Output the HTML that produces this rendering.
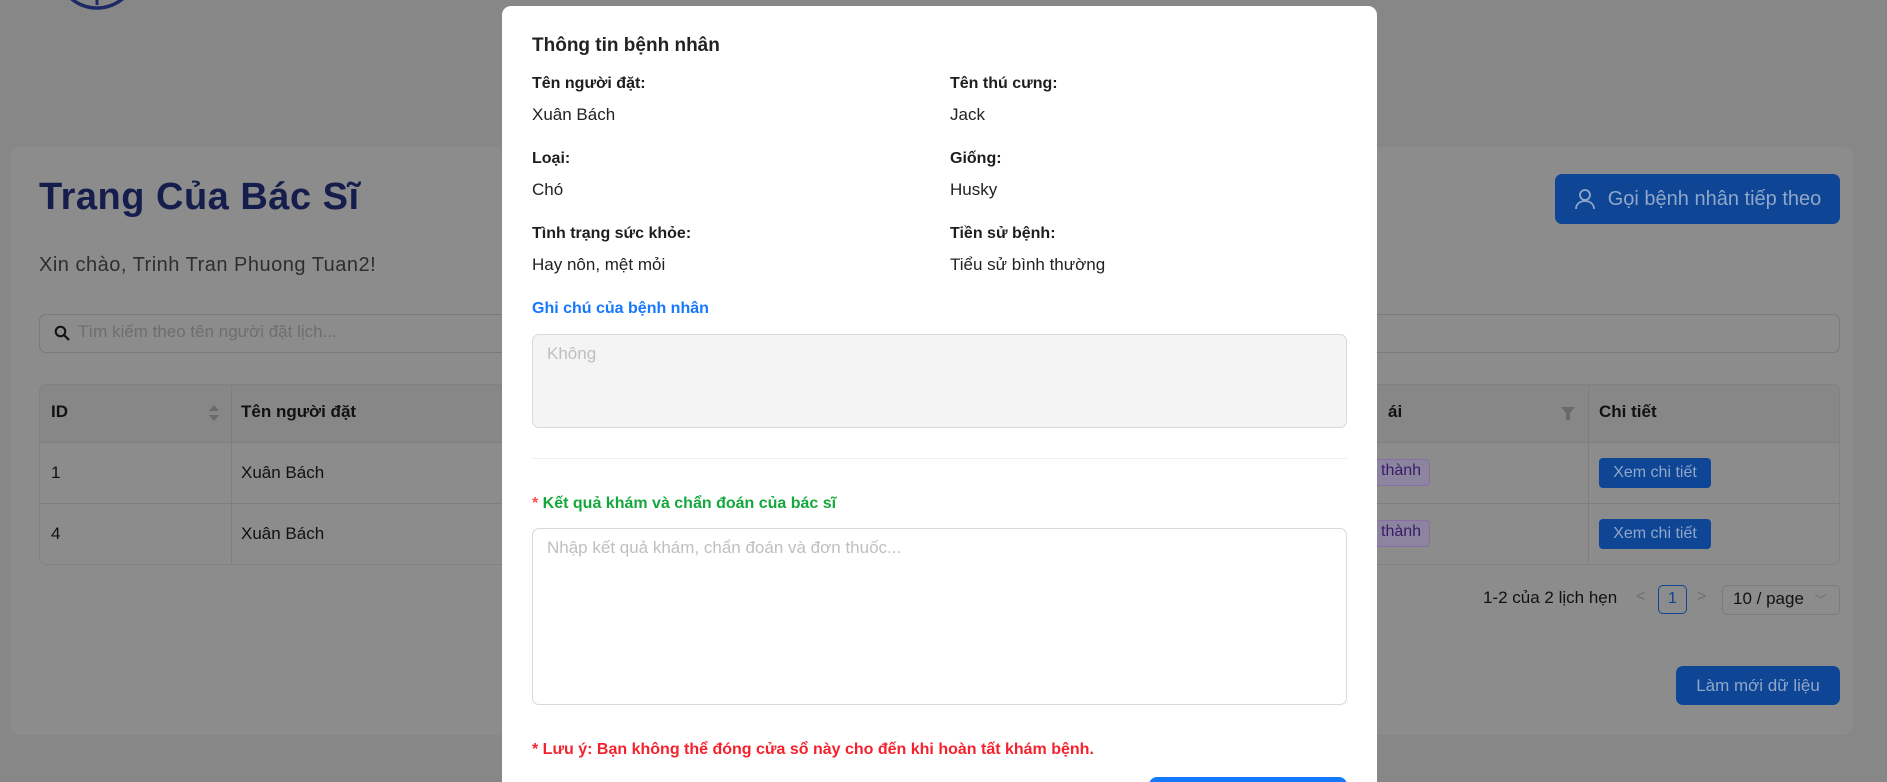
<!DOCTYPE html>
<html style="width:1887px;height:782px;overflow:hidden"><head><meta charset="utf-8"><style>
*{box-sizing:border-box;margin:0;padding:0}
body{width:1887px;height:782px;overflow:hidden;background:#878787;font-family:"Segoe UI","Liberation Sans",sans-serif;position:relative}
.a{position:absolute}
.card{left:10px;top:147px;width:1843px;height:588px;background:#8c8c8c;border-radius:10px}
.title{left:39px;top:176px;font:bold 38px "Liberation Sans",sans-serif;color:#151d4c;letter-spacing:0.5px}
.greet{left:39px;top:254px;font-size:20px;color:#2e2e2e;letter-spacing:0.5px}
.btn{background:#0e4595;color:#8fa7c9;border-radius:7px;display:flex;align-items:center;justify-content:center}
.search{left:39px;top:314px;width:1801px;height:39px;border:1px solid #7a7a7a;border-radius:7px;color:#6e6e6e;font-size:17px;padding:7px 0 0 38px}
.table{left:39px;top:384px;width:1801px;height:181px;border:1px solid #828282;border-radius:7px;overflow:hidden}
.row{position:absolute;left:0;width:100%;border-bottom:1px solid #7e7e7e}
.cell{position:absolute;font-size:17px;color:#111}
.vl{position:absolute;top:0;bottom:0;width:1px;background:#7e7e7e}
.modal{left:502px;top:6px;width:875px;height:776px;background:#fff;border-radius:9px 9px 0 0;overflow:hidden}
.m{position:absolute;font-size:17px;color:#222}
.lb{font-weight:bold;color:#1e1e1e;font-size:16px}
.ta{position:absolute;border:1px solid #d9d9d9;border-radius:7px;font-size:17px;color:#bfbfbf;padding:9px 14px}
</style></head><body>
<svg class="a" style="left:50px;top:0" width="100" height="14"><circle cx="47" cy="-32" r="40" fill="none" stroke="#1e2a66" stroke-width="3.5"/><line x1="47" y1="0" x2="47" y2="5" stroke="#1e2a66" stroke-width="3"/></svg>
<div class="a card"></div>
<div class="a title">Trang Của Bác Sĩ</div>
<div class="a greet">Xin chào, Trinh Tran Phuong Tuan2!</div>
<div class="a btn" style="left:1555px;top:174px;width:285px;height:50px;font-size:20px">
<svg width="22" height="22" viewBox="0 0 22 22" style="margin-right:12px"><circle cx="11" cy="7" r="5" fill="none" stroke="#8fa7c9" stroke-width="1.8"/><path d="M2 21c0-5 4-8 9-8s9 3 9 8" fill="none" stroke="#8fa7c9" stroke-width="1.8"/></svg>Gọi bệnh nhân tiếp theo</div>
<div class="a search"><svg class="a" style="left:14px;top:10px" width="17" height="17" viewBox="0 0 17 17"><circle cx="6.5" cy="6.5" r="4.8" fill="none" stroke="#111" stroke-width="2"/><line x1="10" y1="10" x2="15" y2="15" stroke="#111" stroke-width="2.2"/></svg>Tìm kiếm theo tên người đặt lịch...</div>
<div class="a table">
<div class="row" style="top:0;height:58px;background:#878787"></div>
<div class="row" style="top:58px;height:61px"></div>
<div class="row" style="top:119px;height:61px;border:0"></div>
<div class="vl" style="left:191px"></div><div class="vl" style="left:1548px"></div>
<div class="cell" style="left:11px;top:17px;font-weight:bold">ID</div>
<svg class="a" style="left:168px;top:18px" width="12" height="20"><path d="M1 8L6 2L11 8Z M1 12L6 18L11 12Z" fill="#6a6a6a"/></svg>
<div class="cell" style="left:201px;top:17px;font-weight:bold">Tên người đặt</div>
<div class="cell" style="left:1348px;top:17px;font-weight:bold">ái</div>
<svg class="a" style="left:1521px;top:22px" width="14" height="14"><path d="M0 0H14L9 6V13H5V6Z" fill="#6a6a6a"/></svg>
<div class="cell" style="left:1559px;top:17px;font-weight:bold">Chi tiết</div>
<div class="cell" style="left:11px;top:78px">1</div><div class="cell" style="left:201px;top:78px">Xuân Bách</div>
<div class="cell" style="left:11px;top:139px">4</div><div class="cell" style="left:201px;top:139px">Xuân Bách</div>
<div class="a" style="left:1330px;top:74px;width:60px;height:27px;border:1px solid #8a6fa6;border-radius:4px;background:#8b85a0;color:#3a1c66;font-size:16px;padding:2px 0 0 10px">thành</div>
<div class="a" style="left:1330px;top:135px;width:60px;height:27px;border:1px solid #8a6fa6;border-radius:4px;background:#8b85a0;color:#3a1c66;font-size:16px;padding:2px 0 0 10px">thành</div>
<div class="a btn" style="left:1559px;top:73px;width:112px;height:30px;border-radius:4px;font-size:16px">Xem chi tiết</div>
<div class="a btn" style="left:1559px;top:134px;width:112px;height:30px;border-radius:4px;font-size:16px">Xem chi tiết</div>
</div>
<div class="a" style="left:1483px;top:588px;font-size:17px;color:#111">1-2 của 2 lịch hẹn</div>
<div class="a" style="left:1636px;top:588px;font-size:16px;color:#6e6e6e">&lt;</div>
<div class="a" style="left:1658px;top:585px;width:29px;height:29px;border:1px solid #0e4595;border-radius:5px;font-size:16px;color:#0e4595;text-align:center;line-height:26px">1</div>
<div class="a" style="left:1697px;top:588px;font-size:16px;color:#6e6e6e">&gt;</div>
<div class="a" style="left:1722px;top:585px;width:118px;height:30px;border:1px solid #7a7a7a;border-radius:5px;font-size:17px;color:#111;padding:3px 0 0 10px">10 / page <span style="color:#6e6e6e;font-size:12px;margin-left:6px">﹀</span></div>
<div class="a btn" style="left:1676px;top:666px;width:164px;height:39px;font-size:17px">Làm mới dữ liệu</div>

<div class="a modal">
<div class="m" style="left:30px;top:29px;font-size:19px;font-weight:600;color:#222">Thông tin bệnh nhân</div>
<div class="m lb" style="left:30px;top:69px">Tên người đặt:</div><div class="m" style="left:30px;top:99px">Xuân Bách</div>
<div class="m lb" style="left:448px;top:69px">Tên thú cưng:</div><div class="m" style="left:448px;top:99px">Jack</div>
<div class="m lb" style="left:30px;top:144px">Loại:</div><div class="m" style="left:30px;top:174px">Chó</div>
<div class="m lb" style="left:448px;top:144px">Giống:</div><div class="m" style="left:448px;top:174px">Husky</div>
<div class="m lb" style="left:30px;top:219px">Tình trạng sức khỏe:</div><div class="m" style="left:30px;top:249px">Hay nôn, mệt mỏi</div>
<div class="m lb" style="left:448px;top:219px">Tiền sử bệnh:</div><div class="m" style="left:448px;top:249px">Tiểu sử bình thường</div>
<div class="m" style="left:30px;top:294px;color:#1677ff;font-weight:600;font-size:16px">Ghi chú của bệnh nhân</div>
<div class="ta" style="left:30px;top:328px;width:815px;height:94px;background:#f4f4f4">Không</div>
<div class="a" style="left:30px;top:452px;width:815px;height:1px;background:#eee"></div>
<div class="m" style="left:30px;top:489px;color:#14a83c;font-weight:600;font-size:16px"><span style="color:#ff4d4f">*</span> Kết quả khám và chẩn đoán của bác sĩ</div>
<div class="ta" style="left:30px;top:522px;width:815px;height:177px">Nhập kết quả khám, chẩn đoán và đơn thuốc...</div>
<div class="m" style="left:30px;top:735px;color:#f5222d;font-weight:600;font-size:16px">* Lưu ý: Bạn không thể đóng cửa sổ này cho đến khi hoàn tất khám bệnh.</div>
<div class="a" style="left:647px;top:771px;width:198px;height:40px;background:#1677ff;border-radius:8px"></div>
</div>
</body></html>
